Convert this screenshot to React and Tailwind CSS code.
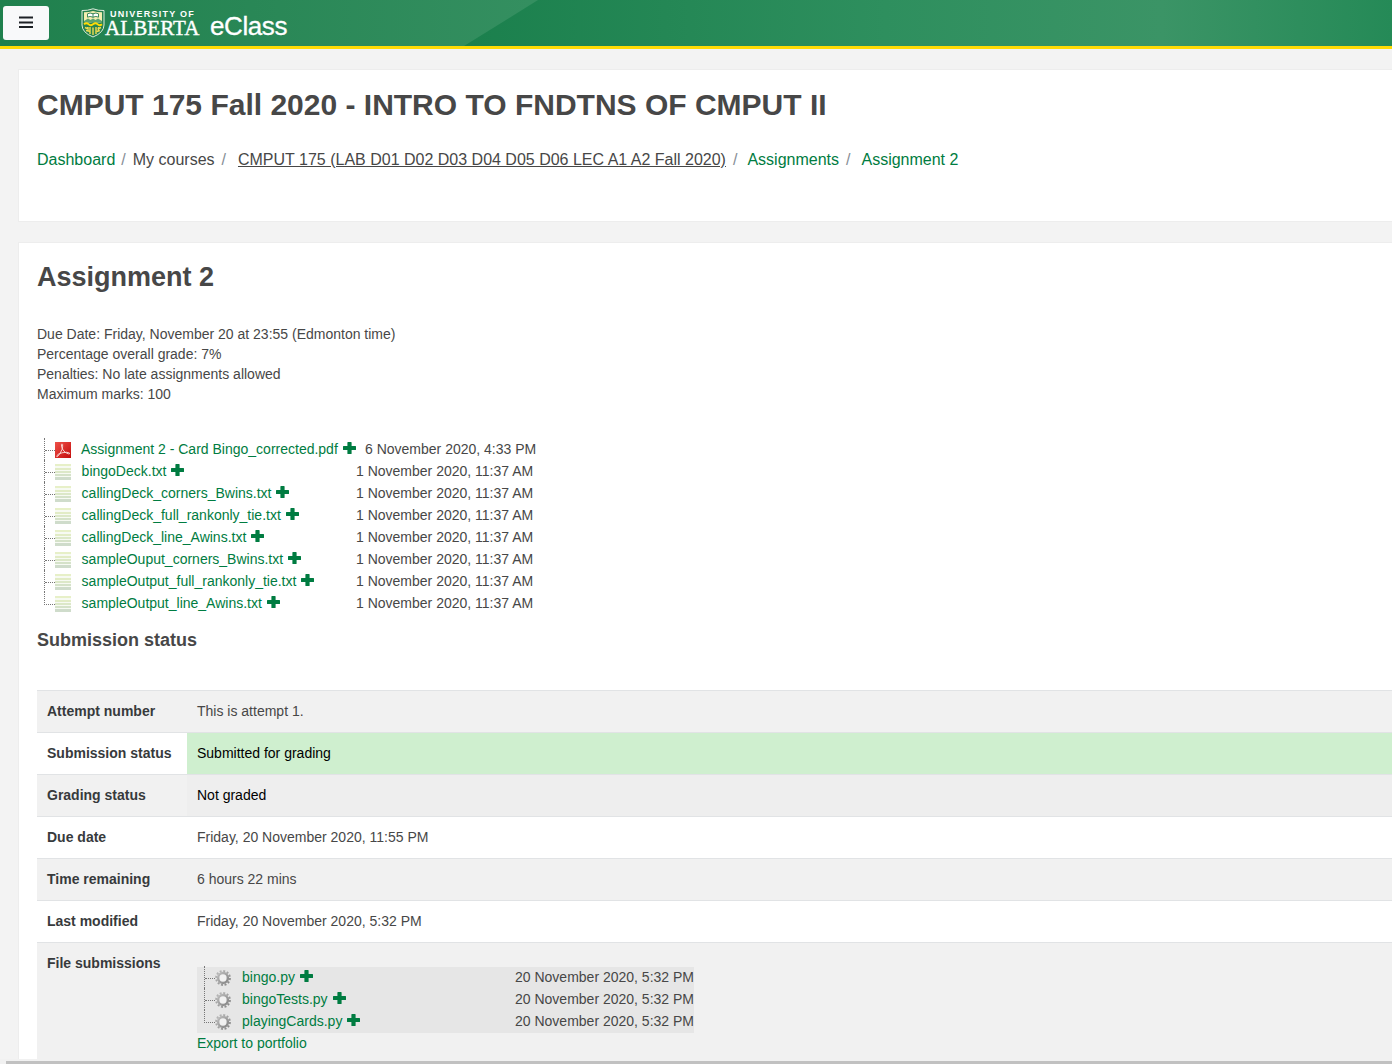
import React from "react";

const FILES = [
  ["Assignment 2 - Card Bingo_corrected.pdf", "6 November 2020, 4:33 PM"],
  ["bingoDeck.txt", "1 November 2020, 11:37 AM"],
  ["callingDeck_corners_Bwins.txt", "1 November 2020, 11:37 AM"],
  ["callingDeck_full_rankonly_tie.txt", "1 November 2020, 11:37 AM"],
  ["callingDeck_line_Awins.txt", "1 November 2020, 11:37 AM"],
  ["sampleOuput_corners_Bwins.txt", "1 November 2020, 11:37 AM"],
  ["sampleOutput_full_rankonly_tie.txt", "1 November 2020, 11:37 AM"],
  ["sampleOutput_line_Awins.txt", "1 November 2020, 11:37 AM"],
];

const SUBMITTED = ["bingo.py", "bingoTests.py", "playingCards.py"];

const STATUS = [
  ["Attempt number", "This is attempt 1.", "bg-[#f1f1f1]", ""],
  ["Submission status", "Submitted for grading", "bg-white", "bg-[#cfefcf] text-black"],
  ["Grading status", "Not graded", "bg-[#f1f1f1]", "bg-[#eeeeee] text-black"],
  ["Due date", "Friday, 20 November 2020, 11:55 PM", "bg-white", ""],
  ["Time remaining", "6 hours 22 mins", "bg-[#f1f1f1]", ""],
  ["Last modified", "Friday, 20 November 2020, 5:32 PM", "bg-white", ""],
];

function Plus() {
  return (
    <svg className="ml-[5px] mb-[3px] h-3 w-[13px] shrink-0" viewBox="0 0 13 12" fill="#007c41">
      <path d="M5 0h3q.6 0 .6.6v3.4h3.800q.6 0 .6.6v2.800q0 .6-.6.6H8.600v3.400q0 .6-.6.6H5q-.6 0-.6-.6V8H.6q-.6 0-.6-.6V4.600q0-.6.6-.6h3.800V.6q0-.6.6-.6z" />
    </svg>
  );
}

function PdfIcon() {
  return (
    <svg className="h-4 w-4" viewBox="0 0 16 16">
      <defs>
        <linearGradient id="pdf" x1="0" y1="0" x2="1" y2="1">
          <stop offset="0" stopColor="#ee5048" />
          <stop offset="1" stopColor="#c40d0c" />
        </linearGradient>
      </defs>
      <rect width="16" height="16" fill="url(#pdf)" />
      <path d="M6.400 2.500q.8-1.200 1.200 0 .3 2-.6 5Q5 12 3 14q-1.500 1-1.500 0Q2.500 12 7 10.800q5.500-1.200 7.500.2.500 1.200-1 .9Q10 11 8 8 6.300 5 6.400 2.500z" fill="none" stroke="#fae0dd" strokeWidth=".9" />
    </svg>
  );
}

function TextIcon() {
  return (
    <svg className="h-4 w-4" viewBox="0 0 16 16">
      <rect width="16" height="16" fill="#f7faf3" />
      <path d="M0 0h16v2H0z" fill="#e7f0c8" />
      <path d="M0 4h16v2H0z" fill="#e2ecc6" />
      <path d="M0 7h16v2H0z" fill="#dce8c8" />
      <path d="M0 10h16v2H0z" fill="#d5e2c9" />
      <path d="M0 13h16v3H0z" fill="#cfdccb" />
    </svg>
  );
}

function GearIcon() {
  return (
    <svg className="h-4 w-4" viewBox="0 0 16 16">
      <defs>
        <linearGradient id="gear" x1="0" y1="0" x2="1" y2="1">
          <stop offset="0" stopColor="#bcbcbc" />
          <stop offset="1" stopColor="#858585" />
        </linearGradient>
      </defs>
      <circle cx="8" cy="8" r="6.900" fill="none" stroke="url(#gear)" strokeWidth="2" strokeDasharray="2 1.613" />
      <circle cx="8" cy="8" r="4.900" fill="#f1f1f1" stroke="url(#gear)" strokeWidth="2.500" />
    </svg>
  );
}

function Tree({ last, icon }) {
  return (
    <div className="flex h-[22px] w-[27px] shrink-0">
      <div className={last ? "h-[13px] w-[11px] border-b border-l border-dotted border-[#777]" : "w-[11px] border-l border-dotted border-[#777]"}>
        {!last && <div className="h-[13px] border-b border-dotted border-[#777]" />}
      </div>
      <div className="pt-1">{icon}</div>
    </div>
  );
}

function Crest() {
  return (
    <svg className="mt-px h-[30px] w-6" viewBox="0 0 24 30">
      <path d="M1 2.500Q6.500 2.800 12 .8 17.500 2.800 23 2.500V17Q23 24.500 12 29 1 24.500 1 17z" fill="#27824f" stroke="#dcebdc" strokeWidth="1" />
      <path d="M3 4.300Q8 4.300 12 3q4 1.300 9 1.300V14q-4 1-9 0-5 1-9 0z" fill="#f4eeb0" />
      <path d="M6.500 5.800q2.500-1.500 5.500 0 3-1.500 5.500 0v3.400q-2.500-1.500-5.500 0-3-1.500-5.500 0z" fill="#fff" stroke="#2a7d4d" strokeWidth=".9" />
      <path d="M12 5.500v4" fill="none" stroke="#2a7d4d" strokeWidth=".9" />
      <path d="M3 14.500v-1.500l4-2.500 2.500 1.500 2.500-1.500 2.500 1.500 2.500-1.500 4 2.500v1.500z" fill="#5da36f" />
      <path d="M3 16.200q2.500-2 4.500 0t4.500 0 4.500 0 4.500 0" fill="none" stroke="#ffdb05" strokeWidth="1.800" />
      <path d="M4 19.500l3.500 1.500M5 22.500l3.500.8M9 19v7M12 19.500v7.500M15 19v7M16.500 21l3.500-1.500M15.800 23.500l3-1M7 19v5M17.500 19v5" stroke="#f0dc50" strokeWidth="1.400" />
    </svg>
  );
}

function Row({ label, bg, cell, children, className }) {
  return (
    <div className={`flex border-t border-[#e1e3e5] ${bg} ${className}`}>
      <div className="w-[150px] shrink-0 pl-2.5 pt-2.5 font-bold leading-5 text-[#373a3c]">{label}</div>
      <div className={`grow pl-2.5 pt-2.5 leading-5 ${cell}`}>{children}</div>
    </div>
  );
}

export default function App() {
  return (
    <div className="flex h-[1064px] w-[1392px] flex-col overflow-hidden bg-[#f3f3f3] font-['Liberation_Sans',Arial,sans-serif] text-sm text-[#474747]">
      <header className="relative h-[49px] shrink-0 border-b-3 border-[#ffdb05] bg-[#278553]">
        <svg className="absolute inset-0 h-[46px] w-full" viewBox="0 0 1392 46" preserveAspectRatio="none">
          <defs>
            <linearGradient id="barA" gradientUnits="userSpaceOnUse" x1="0" y1="0" x2="530" y2="0">
              <stop offset="0" stopColor="#1f804d" />
              <stop offset="1" stopColor="#348f60" />
            </linearGradient>
            <linearGradient id="barB" gradientUnits="userSpaceOnUse" x1="470" y1="0" x2="1392" y2="0">
              <stop offset="0" stopColor="#1b804d" />
              <stop offset=".45" stopColor="#2e8f5e" />
              <stop offset=".75" stopColor="#3b9466" />
              <stop offset="1" stopColor="#258a57" />
            </linearGradient>
          </defs>
          <path d="M0 0H1392V46H0z" fill="url(#barB)" />
          <path d="M0 0H538L464 46H0z" fill="url(#barA)" />
        </svg>
        <div className="relative flex h-[46px] items-start">
          <button className="ml-[3px] mt-1.5 flex h-[34px] w-[46px] items-center justify-center rounded-[3px] bg-[#f8f9fa]">
            <svg className="mb-0.5 h-3 w-3.5" viewBox="0 0 14 12" fill="#1d2125">
              <path d="M0 .5h14v2H0zM0 5.500h14v2H0zM0 10h14v2H0z" />
            </svg>
          </button>
          <div className="ml-8 mt-[7px] flex text-white">
            <Crest />
            <div className="w-[95px] whitespace-nowrap">
              <div className="ml-[5px] mt-0.5 h-[11px] text-[9px] font-bold leading-[11px] tracking-[1.250px]">UNIVERSITY OF</div>
              <div className="h-[17px] font-['Liberation_Serif',serif] text-[21px] leading-[17px] tracking-[0.1px] [-webkit-text-stroke:0.4px_white]">ALBERTA</div>
            </div>
            <div className="ml-2.5 mt-1 text-[26px] leading-[30px] tracking-[-0.4px] [-webkit-text-stroke:0.3px_white]">eClass</div>
          </div>
        </div>
      </header>

      <main className="flex min-h-0 grow flex-col overflow-hidden pl-[18px] pt-5">
        <section className="h-[153px] shrink-0 whitespace-nowrap border border-r-0 border-[#ededed] bg-white pl-[18px] pt-[17px]">
          <h1 className="text-[30px] font-bold leading-9">CMPUT 175 Fall 2020 - INTRO TO FNDTNS OF CMPUT II</h1>
          <nav className="mt-[25px] flex text-base leading-6">
            <a className="text-[#007c41]">Dashboard</a>
            <span className="ml-1.5 text-[#868e96]">/</span>
            <span className="ml-[7px]">My courses</span>
            <span className="ml-[7px] text-[#868e96]">/</span>
            <a className="ml-3 underline">CMPUT 175 (LAB D01 D02 D03 D04 D05 D06 LEC A1 A2 Fall 2020)</a>
            <span className="ml-[7px] text-[#868e96]">/</span>
            <a className="ml-2.5 text-[#007c41]">Assignments</a>
            <span className="ml-[7px] text-[#868e96]">/</span>
            <a className="ml-[11px] text-[#007c41]">Assignment 2</a>
          </nav>
        </section>

        <section className="mt-5 grow whitespace-nowrap border border-r-0 border-[#ededed] bg-white pl-[18px] pt-[17px]">
          <h2 className="text-[27px] font-bold leading-[34px]">Assignment 2</h2>
          <div className="mt-[30px] leading-5">
            <p>Due Date: Friday, November 20 at 23:55 (Edmonton time)</p>
            <p>Percentage overall grade: 7%</p>
            <p>Penalties: No late assignments allowed</p>
            <p>Maximum marks: 100</p>
          </div>
          <div className="mt-[34px] pl-[7px]">
            {FILES.map(([name, date], i) => (
              <div key={name} className="flex h-[22px] items-center">
                <Tree last={i === FILES.length - 1} icon={i === 0 ? <PdfIcon /> : <TextIcon />} />
                <div className={i === 0 ? "flex w-[294px] items-center pl-2.5" : "flex w-[285px] items-center pl-[10.600px]"}>
                  <a className="text-[#007c41]">{name}</a>
                  <Plus />
                </div>
                <span>{date}</span>
              </div>
            ))}
          </div>
          <h3 className="mt-3.5 text-[18px] font-bold leading-6">Submission status</h3>
          <div className="mt-[38px]">
            {STATUS.map(([label, value, bg, cell]) => (
              <Row key={label} label={label} bg={bg} cell={cell} className="h-[42px]">{value}</Row>
            ))}
            <Row label="File submissions" bg="bg-[#f1f1f1]" cell="" className="h-[130px]">
              <div className="mt-3.5 w-[497px] bg-[#e6e6e6] pl-[7px]">
                {SUBMITTED.map((name, i) => (
                  <div key={name} className="flex h-[22px] items-center pb-0.5">
                    <Tree last={i === 2} icon={<GearIcon />} />
                    <div className="flex w-[284px] items-center pl-[11px]">
                      <a className="text-[#007c41]">{name}</a>
                      <Plus />
                    </div>
                    <span>20 November 2020, 5:32 PM</span>
                  </div>
                ))}
              </div>
              <a className="text-[#007c41]">Export to portfolio</a>
            </Row>
          </div>
        </section>
      </main>
      <footer className="flex h-[5px] shrink-0 bg-[#f1f1f1] pl-1.5 pt-0.5">
        <div className="grow bg-[#c1c1c1]" />
      </footer>
    </div>
  );
}
